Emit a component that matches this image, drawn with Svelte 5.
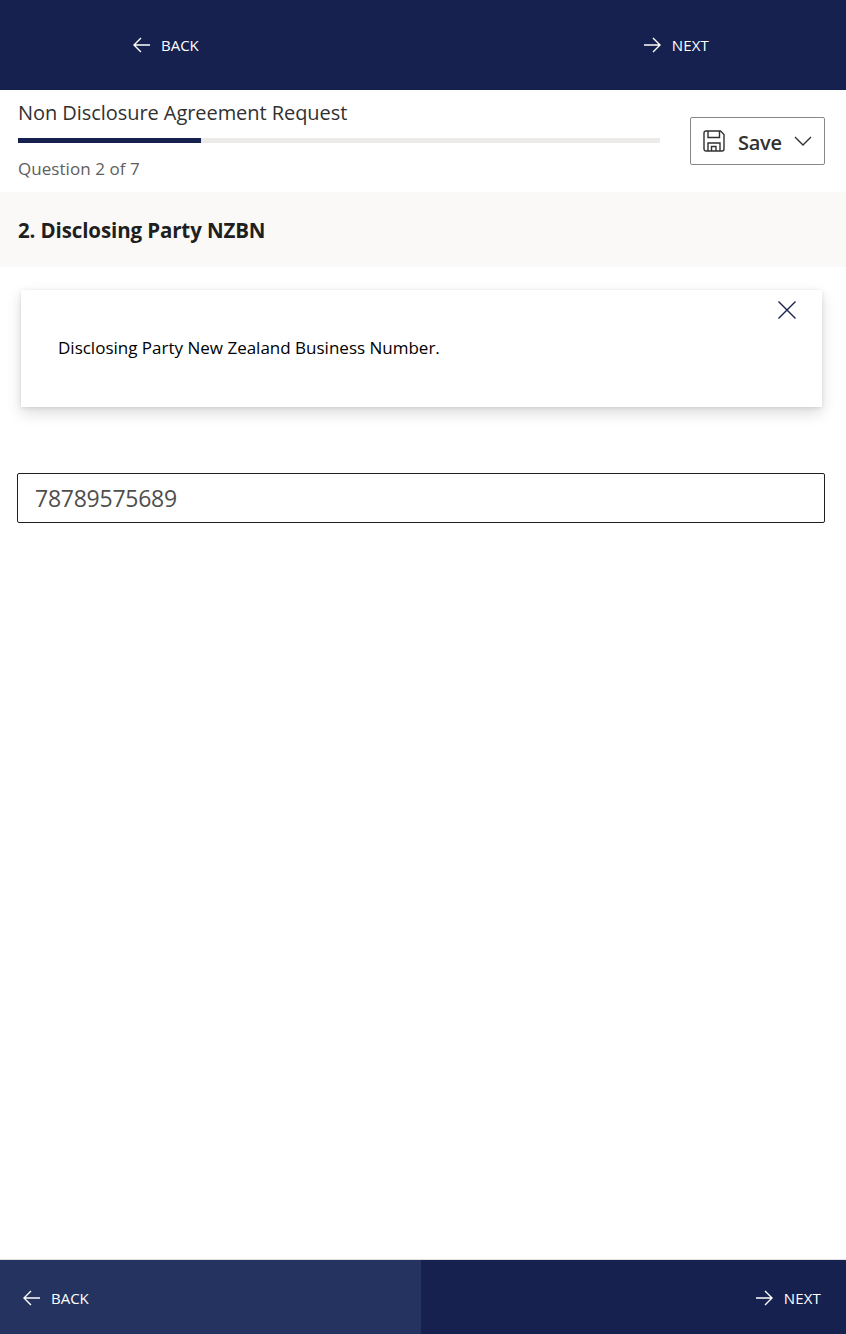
<script>
  const total = 7;
  const current = 2;
</script>

{#snippet arrow(dir)}
  <svg class="arrow" width="18" height="16" viewBox="0 0 18 16" aria-hidden="true">
    {#if dir === 'back'}
      <path d="M17 8H1.4M8 1 1 8l7 7" />
    {:else}
      <path d="M1 8h15.6M10 1l7 7-7 7" />
    {/if}
  </svg>
{/snippet}

<div class="page">
  <nav class="top-nav">
    <button type="button" class="nav-btn">{@render arrow('back')}<span>BACK</span></button>
    <button type="button" class="nav-btn forward">{@render arrow('next')}<span>NEXT</span></button>
  </nav>

  <header class="head">
    <div class="progress-col">
      <h1>Non Disclosure Agreement Request</h1>
      <div class="track"><div class="fill" style={`width: ${(current / total) * 100}%`}></div></div>
      <p class="count">Question {current} of {total}</p>
    </div>
    <button type="button" class="save">
      <svg width="22" height="22" viewBox="0 0 22 22" aria-hidden="true">
        <path d="M1 3A2 2 0 0 1 3 1h14.500L21 4.500V19a2 2 0 0 1-2 2H3a2 2 0 0 1-2-2Z" />
        <path d="M5 1v6.500h11.500V1M5 21v-8h12v8M8.500 21v-4.500H13V21" />
      </svg>
      <span>Save</span>
      <svg width="18" height="10" viewBox="0 0 18 10" aria-hidden="true"><path d="M1 1l8 8 8-8" /></svg>
    </button>
  </header>

  <h2 class="question">2. Disclosing Party NZBN</h2>

  <div class="help">
    <button type="button" class="close" aria-label="Close">
      <svg width="18" height="18" viewBox="0 0 18 18" aria-hidden="true"><path d="M.5.500l17 17M17.500.500l-17 17" /></svg>
    </button>
    <p>Disclosing Party New Zealand Business Number.</p>
  </div>

  <div class="field">
    <input type="text" value="78789575689" aria-label="Disclosing Party NZBN" />
  </div>

  <footer class="foot">
    <button type="button" class="foot-btn back">{@render arrow('back')}<span>BACK</span></button>
    <button type="button" class="foot-btn next forward">{@render arrow('next')}<span>NEXT</span></button>
  </footer>
</div>

<style>
  :global(body) {
    margin: 0;
    background: #fff;
  }

  .page {
    display: flex;
    flex-direction: column;
    height: 1334px;
    font-family: "Open Sans", "Noto Sans", sans-serif;
    color: #323130;
  }

  button {
    font-family: inherit;
    background: none;
    border: none;
    padding: 0;
    cursor: pointer;
  }

  svg path {
    fill: none;
    stroke: currentColor;
    stroke-width: 1.4;
  }

  .top-nav {
    display: flex;
    justify-content: space-between;
    height: 90px;
    padding: 0 137px 0 133px;
    background: #16214f;
  }

  .nav-btn,
  .foot-btn {
    display: flex;
    align-items: center;
    gap: 10px;
    color: #fff;
    font-size: 15px;
  }

  .forward {
    gap: 11px;
    letter-spacing: 0.2px;
  }

  .head {
    display: flex;
    justify-content: space-between;
    align-items: flex-start;
    height: 102px;
    padding: 0 21px 0 18px;
  }

  .progress-col {
    width: 642px;
  }

  h1 {
    margin: 8px 0 0;
    font-size: 20px;
    font-weight: 400;
    line-height: 30px;
    letter-spacing: -0.06px;
    white-space: nowrap;
  }

  .track {
    height: 5px;
    margin-top: 10px;
    background: #edebe9;
  }

  .fill {
    height: 100%;
    background: #16214f;
  }

  .count {
    margin: 14px 0 0;
    font-size: 17px;
    line-height: 24px;
    color: #605e5c;
    letter-spacing: 0.05px;
  }

  .save {
    display: flex;
    align-items: center;
    box-sizing: border-box;
    width: 135px;
    height: 48px;
    margin-top: 27px;
    padding: 0 12px 0 12px;
    border: 1px solid #8a8886;
    border-radius: 2px;
    color: #323130;
    font-size: 20px;
    font-weight: 600;
    letter-spacing: -0.3px;
  }

  .save span {
    flex: 1;
    text-align: left;
    margin-left: 13px;
    padding-top: 2px;
  }

  .question {
    height: 75px;
    margin: 0;
    padding: 0 18px;
    background: #faf9f8;
    color: #201f1e;
    font-size: 20.500px;
    font-weight: 700;
    line-height: 77px;
    letter-spacing: -0.12px;
  }

  .help {
    position: relative;
    height: 117px;
    margin: 23px 24px 0 21px;
    background: #fff;
    box-shadow: 0 6px 14px rgba(0, 0, 0, 0.14), 0 1px 4px rgba(0, 0, 0, 0.1);
  }

  .help p {
    margin: 0;
    padding: 44px 0 0 37px;
    color: #000;
    font-size: 17px;
    line-height: 27px;
  }

  .close {
    position: absolute;
    top: 11px;
    right: 26px;
    width: 18px;
    height: 18px;
    color: #16214f;
  }

  .close svg {
    display: block;
  }

  .field {
    margin: 66px 21px 0 17px;
  }

  input {
    display: block;
    box-sizing: border-box;
    width: 100%;
    height: 50px;
    padding: 0 17px;
    border: 1px solid #201f1e;
    border-radius: 2px;
    outline: none;
    color: #4f4e4c;
    font-family: inherit;
    font-size: 23px;
    letter-spacing: -0.25px;
  }

  .foot {
    display: grid;
    grid-template-columns: 421px 425px;
    box-sizing: border-box;
    height: 75px;
    margin-top: auto;
    border-top: 1px solid #e1dfdd;
  }

  .foot-btn {
    padding-top: 2px;
  }

  .foot-btn.back {
    background: #243360;
    padding-left: 23px;
  }

  .foot-btn.next {
    background: #16214f;
    justify-content: flex-end;
    padding-right: 25px;
  }

  .arrow {
    flex: none;
  }
</style>
